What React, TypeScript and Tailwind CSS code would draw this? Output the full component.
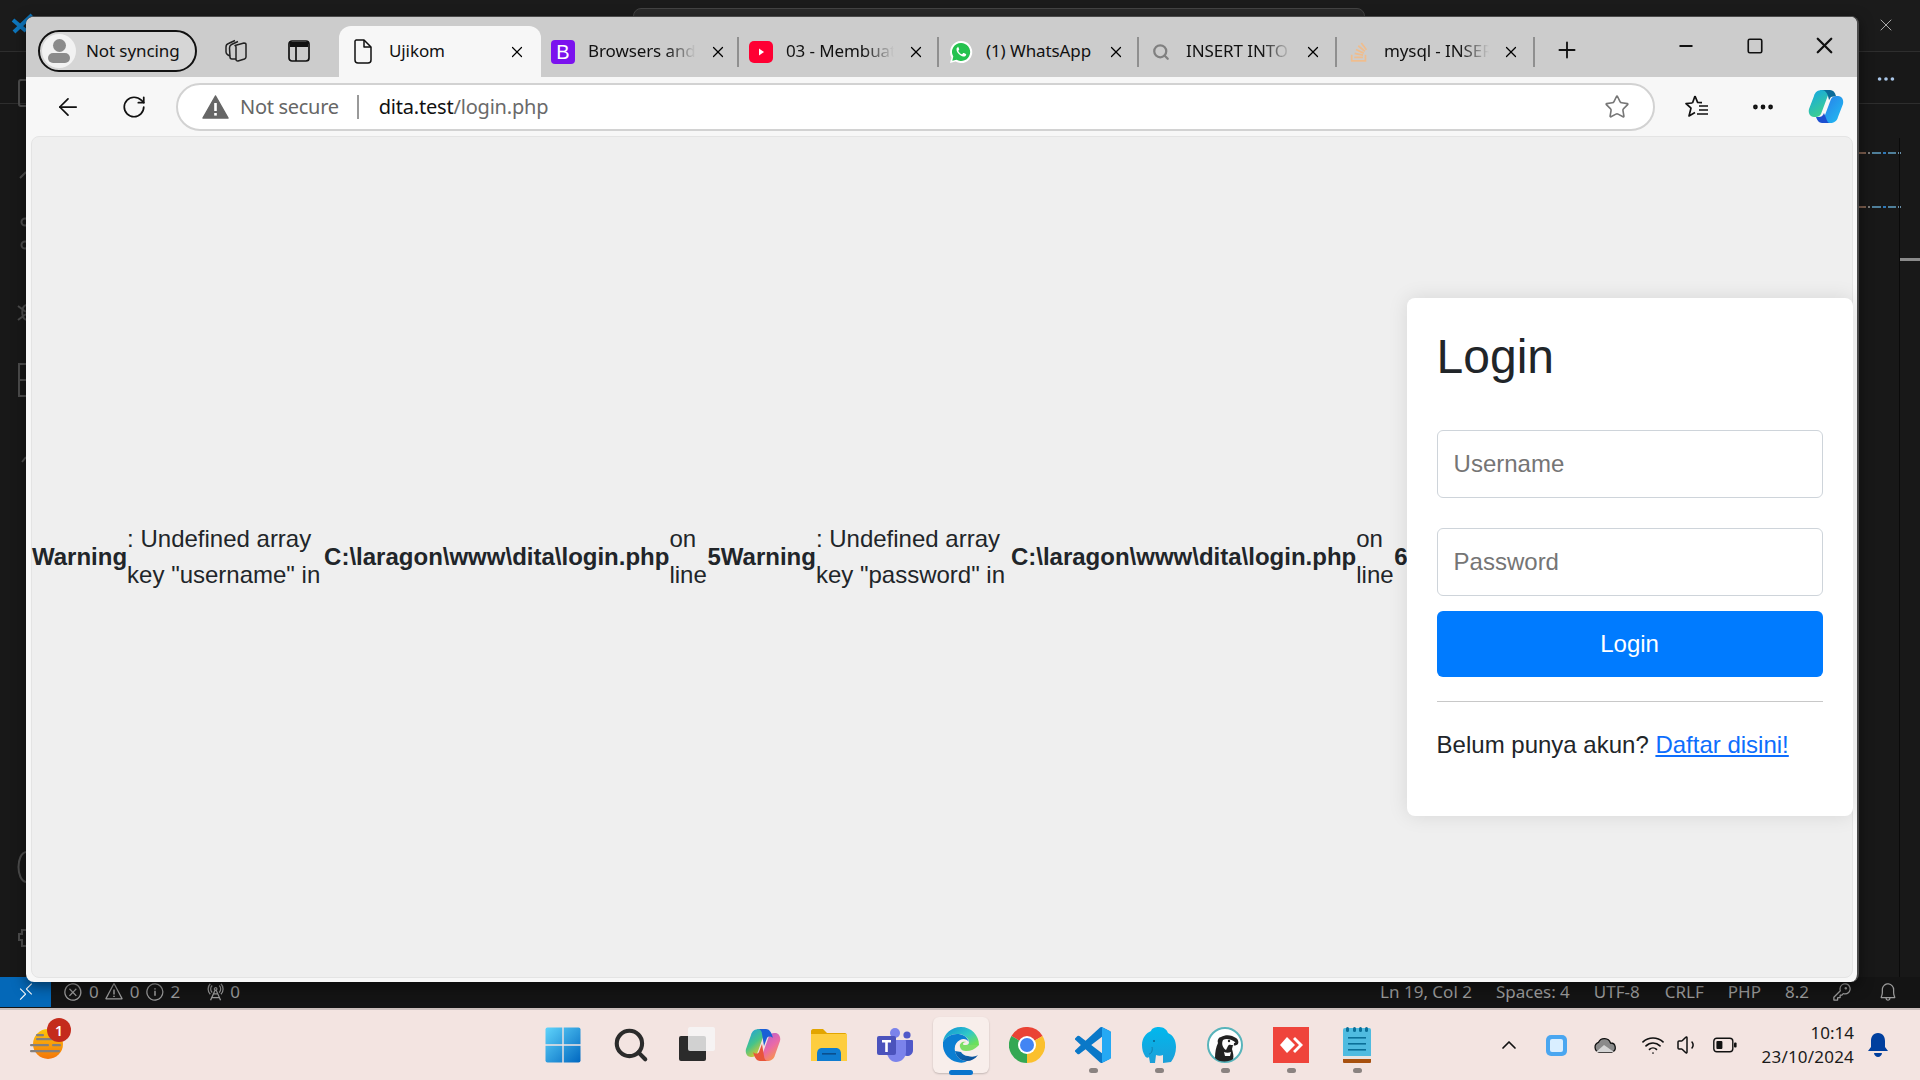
import React from 'react';
import { ArrowLeft, RotateCw, Star, Plus, Minus, Square, X, Search, ChevronUp, Wifi, Volume1, Ellipsis } from 'lucide-react';
import { VscError, VscWarning, VscInfo, VscRadioTower, VscKey, VscBell, VscRemote } from 'react-icons/vsc';
import { FaStackOverflow } from 'react-icons/fa';

const sans = 'font-["Liberation_Sans",sans-serif]';
const ui = 'font-["Noto_Sans",sans-serif]';

type TabProps = { icon: React.ReactNode; title: string; width: string; textWidth?: string; sep?: boolean; fade?: boolean };

const Tab: React.FC<TabProps> = ({ icon, title, width, textWidth = 'w-[108px]', sep = true, fade = true }) => (
  <div className={`flex items-center h-[51px] pl-[10px] relative shrink-0 ${width}`}>
    <div className="w-[24px] h-[24px] flex items-center justify-center shrink-0">{icon}</div>
    <span
      className={`ml-[13px] pb-[2px] overflow-hidden whitespace-nowrap text-[17px] text-[#111] tracking-[-0.1px] ${textWidth} ${
        fade ? '[mask-image:linear-gradient(to_right,black_72%,transparent_100%)]' : ''
      }`}
    >
      {title}
    </span>
    <X size={18} strokeWidth={1.6} className="ml-[13px] text-black shrink-0" />
    {sep && <div className="absolute right-0 top-[11px] w-[2px] h-[30px] bg-[#8f8f8f]" />}
  </div>
);

const BootstrapIcon = () => (
  <div className={`w-[24px] h-[24px] rounded-[4px] bg-[#7b12ee] text-white text-[20px] leading-[24px] text-center ${sans}`}>B</div>
);

const YoutubeIcon = () => (
  <svg width="24" height="22" viewBox="0 0 24 22">
    <rect width="24" height="22" y="0" rx="5" fill="#ff0033" />
    <path d="M10 7.500l5 3.500-5 3.500z" fill="#fff" />
  </svg>
);

const WhatsappIcon = () => (
  <svg width="24" height="24" viewBox="0 0 24 24">
    <path d="M12 1a11 11 0 0 0-9.500 16.500L1 23l5.700-1.500A11 11 0 1 0 12 1z" fill="#fff" />
    <path d="M12 3a9 9 0 0 0-7.700 13.600L3.300 20.700l4.200-1A9 9 0 1 0 12 3z" fill="#25c24f" />
    <path
      d="M8.800 7.300c-.5 0-1.300.7-1.300 2.200 0 2 1.500 4 3.500 5.500 2 1.400 3.500 1.800 4.500 1.500 1-.3 1.700-1.200 1.700-2 0-.3-.1-.4-.3-.5l-2-1c-.3-.1-.5-.1-.7.100l-.8 1c-.2.200-.4.200-.7.100-1.600-.7-2.700-1.900-3.300-3-.1-.3 0-.5.100-.6l.6-.8c.1-.2.200-.4.100-.6l-.8-2c-.1-.3-.3-.4-.6-.4z"
      fill="#fff"
    />
  </svg>
);

const WindowsLogo = () => (
  <svg className="mr-[4px]" width="36" height="36" viewBox="0 0 36 36">
    <defs>
      <linearGradient id="win" x1="0" y1="0" x2="1" y2="1">
        <stop offset="0" stopColor="#5fd4fb" />
        <stop offset="1" stopColor="#0067c0" />
      </linearGradient>
    </defs>
    <rect x="0.5" y="0.5" width="35" height="35" rx="2" fill="url(#win)" />
    <path d="M18 0v36M0 18h36" stroke="#f3e4e1" strokeWidth="1.4" />
  </svg>
);

const TaskView = () => (
  <svg width="36" height="36" viewBox="0 0 36 36">
    <rect x="0" y="9" width="27" height="25" rx="2" fill="#2b2b2b" />
    <rect x="9" y="0" width="27" height="24" rx="2" fill="#f6f6f6" fillOpacity="0.82" />
  </svg>
);

const CopilotColor = () => (
  <svg width="36" height="34" viewBox="0 0 36 34">
    <defs>
      <linearGradient id="cpa" x1="0" y1="0" x2="0.6" y2="1">
        <stop offset="0" stopColor="#1c9be8" />
        <stop offset="0.55" stopColor="#45c48a" />
        <stop offset="1" stopColor="#f2c81e" />
      </linearGradient>
      <linearGradient id="cpb" x1="0" y1="0" x2="0.6" y2="1">
        <stop offset="0" stopColor="#a85ed8" />
        <stop offset="0.6" stopColor="#ea6aa8" />
        <stop offset="1" stopColor="#f8944a" />
      </linearGradient>
    </defs>
    <path d="M14 1h7l-9 25c-1 2-3 3-5 3H6C2 29 0 25 1 21l5-14c1-4 4-6 8-6z" fill="url(#cpa)" />
    <path d="M22 33h-7l9-25c1-2 3-3 5-3h1c4 0 6 4 5 8l-5 14c-1 4-4 6-8 6z" fill="url(#cpb)" />
    <path d="M13 1h8c3 0 5 3 6 6l1 3c-2-2-5-2-6 0l-3 8-2-12c0-3-2-5-4-5z" fill="#1a5fd6" />
    <path d="M23 33h-8c-3 0-5-3-6-6l-1-3c2 2 5 2 6 0l3-8 2 12c0 3 2 5 4 5z" fill="#e8553a" />
  </svg>
);

const CopilotBlue = () => (
  <svg width="36" height="33" viewBox="0 0 36 33">
    <defs>
      <linearGradient id="cca" x1="0" y1="0" x2="0.5" y2="1">
        <stop offset="0" stopColor="#12a5e8" />
        <stop offset="1" stopColor="#3ed08f" />
      </linearGradient>
      <linearGradient id="ccb" x1="0" y1="0" x2="1" y2="1">
        <stop offset="0" stopColor="#2a7ae8" />
        <stop offset="1" stopColor="#1fc0f2" />
      </linearGradient>
    </defs>
    <path d="M14 0h8l-9 24c-1 2-3 3-5 3H6C2 27 0 23 1 19L6 6c1-4 4-6 8-6z" fill="url(#cca)" />
    <path d="M22 33h-8l9-24c1-2 3-3 5-3h2c4 0 6 4 5 8l-5 13c-1 4-4 6-8 6z" fill="url(#ccb)" />
    <path d="M14 0h8c3 0 5 2 6 6l-5 1c-1 1-1 2-2 3L20 6c-1-3-3-6-6-6z" fill="#0c6b98" />
    <path d="M14 33h8c-2 0-3-2-4-5l-2-5-1 2c-1 1-2 2-4 2h-3c1 3 3 6 6 6z" fill="#1d4fd0" />
  </svg>
);

const Explorer = () => (
  <svg width="36" height="32" viewBox="0 0 36 32">
    <path d="M0 2c0-1 1-2 2-2h10l4 4h18c1 0 2 1 2 2v3H0z" fill="#e2a500" />
    <path d="M0 5h36v27H0z" fill="#fdcd3f" />
    <path d="M6 32v-7c0-4 2-6 5-6h14c3 0 5 2 5 6v7z" fill="#0f7cd0" />
    <rect x="11" y="24" width="14" height="1.6" fill="#0a4f8e" />
  </svg>
);

const Teams = () => (
  <svg width="36" height="34" viewBox="0 0 36 34">
    <circle cx="18" cy="5" r="5" fill="#7b83eb" />
    <circle cx="30" cy="7" r="3.6" fill="#5059c9" />
    <path d="M26 12h9c1 0 1 1 1 1v9c0 4-3 6-6 6-2 0-4-1-4-3z" fill="#5059c9" />
    <path d="M10 12h18c1 0 1 1 1 1v11c0 6-5 10-10 10S10 29 10 24z" fill="#7b83eb" />
    <rect x="0" y="8" width="19" height="19" rx="2" fill="#4b53bc" />
    <path d="M5 12h9v2.4h-3.2V24H8.2v-9.6H5z" fill="#fff" />
  </svg>
);

const Edge = () => (
  <svg width="36" height="36" viewBox="0 0 36 36">
    <defs>
      <linearGradient id="ed1" x1="0" y1="0" x2="1" y2="0.8">
        <stop offset="0" stopColor="#0c8cd8" />
        <stop offset="0.6" stopColor="#30c8c8" />
        <stop offset="1" stopColor="#6de05a" />
      </linearGradient>
      <linearGradient id="ed2" x1="0" y1="0" x2="1" y2="1">
        <stop offset="0" stopColor="#0a6fc0" />
        <stop offset="1" stopColor="#0c4a90" />
      </linearGradient>
    </defs>
    <path d="M18 0C8 0 1 7 0 15c3-5 8-8 14-8 8 0 12 5 12 8 0 2-1 3-3 3h13c0-10-8-18-18-18z" fill="url(#ed1)" />
    <path d="M0 15c-1 10 5 18 14 20 4 1 7 1 10-1-6 0-11-4-12-10-1-5 1-9 5-11 3-2 7-1 9 2-2-6-7-8-12-8C8 7 3 10 0 15z" fill="#0b7ed2" />
    <path d="M12 24c1 6 6 10 12 10 4 0 8-2 11-6-3 2-7 2-10 1-3 0-6-2-7-4-2 0-4-1-6-1z" fill="url(#ed2)" />
    <path d="M17 20c1 3 3 4 6 4 5 0 9-2 12-5l1-1H23c-2 0-3 0-3-1 0-1 1-2 3-2-3-1-7 1-6 5z" fill="#6fdc58" fillOpacity="0.9" />
  </svg>
);

const Chrome = () => (
  <svg width="36" height="36" viewBox="0 0 36 36">
    <path d="M18 18 2.400 9A18 18 0 0 1 33.600 9z" fill="#ea4335" />
    <path d="M18 18 2.400 9A18 18 0 0 0 18 36z" fill="#34a853" />
    <path d="M18 18 33.600 9A18 18 0 0 1 18 36z" fill="#fbc02d" />
    <circle cx="18" cy="18" r="9" fill="#fff" />
    <circle cx="18" cy="18" r="7" fill="#4285f4" />
  </svg>
);

const VSCodeLogo = () => (
  <svg width="36" height="36" viewBox="0 0 24 24">
    <path
      d="M23.15 2.587L18.21.21a1.494 1.494 0 0 0-1.705.29l-9.46 8.63-4.12-3.128a.999.999 0 0 0-1.276.057L.327 7.261A1 1 0 0 0 .326 8.74L3.899 12 .326 15.26a1 1 0 0 0 .001 1.479L1.65 17.94a.999.999 0 0 0 1.276.057l4.12-3.128 9.46 8.63a1.492 1.492 0 0 0 1.704.29l4.942-2.377A1.5 1.5 0 0 0 24 20.06V3.939a1.5 1.5 0 0 0-.85-1.352zm-5.146 14.861L10.826 12l7.178-5.448v10.896z"
      fill="#0a78c8"
    />
    <path d="M18 .1 23.150 2.587A1.500 1.500 0 0 1 24 3.939V20.060a1.500 1.500 0 0 1-.85 1.352L18 23.900z" fill="#25a9f4" />
  </svg>
);

const Elephant = () => (
  <svg width="34" height="36" viewBox="0 0 34 36">
    <defs>
      <linearGradient id="el" x1="0" y1="0" x2="0" y2="1">
        <stop offset="0" stopColor="#00b8ee" />
        <stop offset="1" stopColor="#1d9fd8" />
      </linearGradient>
    </defs>
    <path d="M17 0c5 0 8 3 9 6 5 2 8 7 8 14 0 6-2 11-5 15l-8 1v-8c-2 1-5 1-7 0l-1 8H8l-1-6c-1 1-3 1-4-1-2-3-3-7-3-11 0-7 4-12 9-14 1-3 4-4 8-4z" fill="url(#el)" />
    <path d="M7 27c2 0 4-3 3-7" stroke="#117fb0" strokeWidth="1" fill="none" />
    <circle cx="12" cy="14" r="1" fill="#0a5f88" />
  </svg>
);

const DBeaver = () => (
  <svg width="36" height="36" viewBox="0 0 36 36">
    <circle cx="18" cy="18" r="17" fill="#fff" stroke="#58b4bb" strokeWidth="2" />
    <path d="M8 31c0-6 1-11 3-15-1-3 1-6 3-6 5-3 11-2 15 1 2 1 3 4 2 6-1 1-3 2-5 1l-1 4c1 4 2 7 1 10-3 3-14 4-18-1z" fill="#222" />
    <path d="M16 13c3-2 8-1 12 2 1 2 0 3-2 3-3 0-4-1-5 1l-2 4c-3-2-5-6-3-10z" fill="#fff" />
    <path d="M17 25c2 1 5 1 7 0l-1 4h-5z" fill="#fff" />
    <circle cx="22" cy="14" r="1.200" fill="#222" />
    <circle cx="28" cy="17" r="1.200" fill="#222" />
  </svg>
);

const AnyDesk = () => (
  <svg width="36" height="36" viewBox="0 0 36 36">
    <rect width="36" height="36" fill="#ef443b" />
    <path d="M14 10l8 8-8 8-7-8z" fill="#fff" />
    <path d="M22 10l8 8-8 8-2-2 6-6-6-6z" fill="#fff" />
  </svg>
);

const Notepad = () => (
  <svg width="28" height="36" viewBox="0 0 28 36">
    <rect y="1" width="28" height="30" rx="2" fill="#4fbbe0" />
    <rect y="30" width="28" height="6" rx="1" fill="#a8510f" />
    <rect y="29" width="28" height="3" fill="#e8e4e2" />
    <g fill="#0a6f98">
      <rect x="3" y="0" width="3" height="5" rx="1.5" />
      <rect x="10" y="0" width="3" height="5" rx="1.5" />
      <rect x="16" y="0" width="3" height="5" rx="1.5" />
      <rect x="22" y="0" width="3" height="5" rx="1.5" />
      <rect x="5" y="10" width="18" height="1.6" />
      <rect x="5" y="16" width="18" height="1.6" />
      <rect x="5" y="22" width="18" height="1.6" />
    </g>
  </svg>
);

const WeatherIcon = () => (
  <svg width="36" height="34" viewBox="0 0 36 34">
    <defs>
      <linearGradient id="sun" x1="0" y1="0" x2="0" y2="1">
        <stop offset="0" stopColor="#fcc60a" />
        <stop offset="1" stopColor="#f4760a" />
      </linearGradient>
    </defs>
    <circle cx="18" cy="19" r="15" fill="url(#sun)" />
    <g fill="#85807c">
      <rect x="6" y="9" width="8" height="2.2" rx="1" />
      <rect x="6" y="13" width="30" height="2.2" rx="1" />
      <rect x="0" y="19" width="19" height="2.2" rx="1" />
      <rect x="22" y="19" width="9" height="2.2" rx="1" />
      <rect x="0" y="25" width="30" height="2.2" rx="1" />
    </g>
  </svg>
);

const OneDrive = () => (
  <svg width="24" height="16" viewBox="0 0 24 16">
    <path d="M6 15a5 5 0 0 1-.6-9.6A6.5 6.5 0 0 1 17.5 6 4.6 4.6 0 0 1 19 15z" fill="#8a8a8a" stroke="#111" strokeWidth="1.3" />
    <path d="M3 15l8-7 10 7z" fill="#d4d4d4" />
  </svg>
);

const Battery = () => (
  <svg width="24" height="16" viewBox="0 0 24 16" fill="none">
    <rect x="0.8" y="1.2" width="19" height="13.6" rx="3" stroke="#111" strokeWidth="1.4" />
    <rect x="3.4" y="4" width="6" height="8" rx="1" fill="#111" />
    <rect x="21" y="5.5" width="2.6" height="5" rx="1" fill="#111" />
  </svg>
);

const FavoritesIcon = () => (
  <svg width="26" height="26" viewBox="0 0 26 26" fill="none" stroke="#111" strokeWidth="1.7" strokeLinejoin="round">
    <path d="M11 2l2.6 6.4 4.4.3M8.5 9l-6.5.5 5 4.6L5 22l6-3.4" />
    <path d="M11 2 8.5 9" />
    <path d="M15 12h9M15 16h9M13 20h11" />
  </svg>
);

// slivers of the vs code activity bar that stick out left of the browser
const ActivitySliver = () => (
  <svg width="26" height="960" viewBox="0 0 26 960" fill="none" stroke="#4d4d4d" strokeWidth="2">
    <path d="M26 80h-5c-1 0-2 1-2 2v22c0 1 1 2 2 2h5" />
    <path d="M20 178l6-6" />
    <circle cx="25" cy="222" r="3.500" />
    <circle cx="25" cy="245" r="3.500" />
    <path d="M18 306l8 6M18 320l8-6M26 305c-5 2-5 12 0 15" />
    <path d="M26 364h-7v32h7M19 380h7" />
    <path d="M22 462l4-5" />
    <path d="M26 852c-10 2-10 28 0 30" />
    <path d="M26 930h-4v4h-3v6h3v6h4" />
  </svg>
);

const CodeDash: React.FC<{ top: string }> = ({ top }) => (
  <div className={`absolute left-[1859px] flex gap-[2px] h-[2px] ${top}`}>
    <div className="w-[7px] bg-[#7a5c4c]" />
    <div className="w-[2px] bg-[#7a7a7a]" />
    <div className="w-[9px] bg-[#4f7f9a]" />
    <div className="w-[3px] bg-[#2f78b8]" />
    <div className="w-[8px] bg-[#4f7f9a]" />
    <div className="w-[3px] bg-[#6a8fa8]" />
  </div>
);

const taskbarIcons: { el: React.ReactNode; open?: boolean; active?: boolean }[] = [
  { el: <WindowsLogo /> },
  { el: <Search size={38} strokeWidth={2.6} className="text-[#2b2b2b]" /> },
  { el: <TaskView /> },
  { el: <CopilotColor /> },
  { el: <Explorer /> },
  { el: <Teams /> },
  { el: <Edge />, active: true },
  { el: <Chrome /> },
  { el: <VSCodeLogo />, open: true },
  { el: <Elephant />, open: true },
  { el: <DBeaver />, open: true },
  { el: <AnyDesk />, open: true },
  { el: <Notepad />, open: true },
];

const Warning: React.FC<{ text: [string, string]; width: string; line: string }> = ({ text, width, line }) => (
  <>
    <b className="shrink-0">Warning</b>
    <span className={`shrink-0 whitespace-nowrap ${width}`}>
      {text[0]}
      <br />
      {text[1]}
    </span>
    <b className="shrink-0">C:\laragon\www\dita\login.php</b>
    <span className="shrink-0 w-[38px]">
      on
      <br />
      line
    </span>
    <b className="shrink-0">{line}</b>
  </>
);

const App: React.FC = () => {
  return (
    <div className={`w-[1920px] h-[1080px] relative overflow-hidden flex flex-col bg-[#1b1b1b] ${ui}`}>
      {/* vs code sitting behind the browser */}
      <div className="flex-1 flex flex-col relative">
        <div className="h-[52px] border-b border-[#2e2e2e] flex justify-center items-start pt-[8px]">
          <div className="w-[732px] h-[30px] ml-[78px] rounded-t-lg bg-[#2a2a2a] border border-[#444]" />
        </div>
        <div className="h-[52px] border-b border-[#2e2e2e] bg-[#181818]" />
        <div className="flex-1 bg-[#181818]" />
        <div className="absolute left-0 top-0"><ActivitySliver /></div>
        <X size={20} strokeWidth={1.2} className="absolute left-[1876px] top-[15px] text-[#aaa]" />
        <Ellipsis size={22} className="absolute left-[1875px] top-[68px] text-[#a9c6e8]" />
        <CodeDash top="top-[152px]" />
        <CodeDash top="top-[206px]" />
        <div className="absolute left-[1899px] top-[138px] bottom-0 w-[1px] bg-[#0a0a0a]" />
        <div className="absolute left-[1900px] top-[258px] w-[20px] h-[3px] bg-[#8a8a8a]" />
        <svg className="absolute left-[10px] top-[12px]" width="26" height="24" viewBox="0 0 26 24">
          <path d="M3 8l13 11M22 3 4 20" stroke="#0e76bd" strokeWidth="4" />
        </svg>
      </div>

      {/* vs code status bar */}
      <div className="h-[31px] shrink-0 flex items-center bg-[#141414] text-[#9a9a9a] text-[17px] pb-[1px]">
        <div className="w-[51px] h-full bg-[#0468b8] flex items-center justify-center text-white">
          <VscRemote size={20} />
        </div>
        <div className="flex items-center ml-[12px]">
          <VscError size={20} />
          <span className="ml-[6px]">0</span>
          <VscWarning size={20} className="ml-[5px]" />
          <span className="ml-[6px]">0</span>
          <VscInfo size={20} className="ml-[6px]" />
          <span className="ml-[5px]">2</span>
          <VscRadioTower size={20} className="ml-[25px]" />
          <span className="ml-[5px]">0</span>
        </div>
        <div className="flex-1" />
        <div className="flex items-center mr-[22px]">
          <span>Ln 19, Col 2</span>
          <span className="ml-[24px]">Spaces: 4</span>
          <span className="ml-[24px]">UTF-8</span>
          <span className="ml-[25px]">CRLF</span>
          <span className="ml-[24px]">PHP</span>
          <span className="ml-[24px]">8.2</span>
          <VscKey size={20} className="ml-[23px]" />
          <VscBell size={20} className="ml-[26px]" />
        </div>
      </div>

      {/* windows taskbar */}
      <div className="h-[72px] shrink-0 bg-[#f3e4e1] border-t-2 border-[#cbbfbc] flex items-center relative">
        <div className="absolute left-[30px] top-[15px]">
          <WeatherIcon />
          <div className="absolute left-[17px] -top-[7px] w-[24px] h-[24px] rounded-full bg-[#c42b1c] text-white text-[14px] font-semibold flex items-center justify-center">
            1
          </div>
        </div>
        <div className="flex ml-[532px] h-full items-center">
          {taskbarIcons.map((t, i) => (
            <div key={i} className="w-[66px] h-[56px] flex items-center justify-center relative">
              {t.active && (
                <div className="absolute inset-y-0 left-[5px] right-[5px] rounded-md bg-[#f8eeeb] shadow-[0_1px_2px_rgba(0,0,0,0.2)]" />
              )}
              <div className="relative flex">{t.el}</div>
              {t.active && <div className="absolute bottom-[-2px] left-[21px] w-[24px] h-[5px] rounded-full bg-[#0a74cc]" />}
              {t.open && <div className="absolute bottom-0 left-[29px] w-[9px] h-[5px] rounded-full bg-[#8a8280]" />}
            </div>
          ))}
        </div>
        <div className="flex-1" />
        <div className="flex items-center text-[#111]">
          <ChevronUp size={24} strokeWidth={1.7} />
          <div className="ml-[25px] w-[21px] h-[21px] rounded-[5px] bg-[#4aa6f0] flex items-center justify-center">
            <div className="w-[13px] h-[13px] rounded-[2px] bg-[#d9eeff]" />
          </div>
          <div className="ml-[26px]"><OneDrive /></div>
          <Wifi size={24} strokeWidth={1.7} className="ml-[24px]" />
          <Volume1 size={24} strokeWidth={1.5} className="ml-[11px]" />
          <div className="ml-[13px]"><Battery /></div>
          <div className="ml-[14px] w-[103px] flex flex-col items-end text-[17px] leading-[24px] text-[#1a1a1a]">
            <span>10:14</span>
            <span className="tracking-[0.2px]">23/10/2024</span>
          </div>
          <svg className="ml-[14px] mr-[32px]" width="20" height="24" viewBox="0 0 20 24">
            <path d="M10 0c5 0 7 4 7 8v6l3 4H0l3-4V8c0-4 2-8 7-8z" fill="#003f9e" />
            <path d="M6 20h8c0 2-2 4-4 4s-4-2-4-4z" fill="#003f9e" />
          </svg>
        </div>
      </div>

      {/* browser window */}
      <div className="absolute left-[26px] top-[16px] w-[1833px] h-[966px] rounded-lg overflow-hidden flex flex-col bg-[#f7f7f7] border-t border-r-2 border-[#4a4a4a] shadow-[0_4px_14px_rgba(0,0,0,0.5)]">
        <div className="h-[60px] shrink-0 bg-[#cccccc] flex items-end relative">
          <div className="absolute left-[12px] top-[13px] w-[159px] h-[42px] rounded-full border-2 border-[#111] bg-[#d6d6d6] flex items-center">
            <div className="ml-[2px] w-[34px] h-[34px] rounded-full bg-[#f2f2f2] flex flex-col items-center justify-center">
              <div className="w-[13px] h-[13px] rounded-full bg-[#8b8b8b]" />
              <div className="w-[22px] h-[10px] mt-[1px] rounded-full bg-[#8b8b8b]" />
            </div>
            <span className="ml-[10px] text-[17px] text-[#111] tracking-[-0.1px]">Not syncing</span>
          </div>
          <svg className="absolute left-[198px] top-[22px]" width="24" height="24" viewBox="0 0 24 24" fill="none" stroke="#222" strokeWidth="1.5" strokeLinejoin="round">
            <path d="M11 6.500l9-2.500c1 0 2 .5 2 1.500V18c0 1-.5 1.500-1.500 2L14 22c-1 .2-2-.5-2-1.500V8c0-1 0-1-1-1.500z" />
            <path d="M12 20 8 20c-1 0-2-1-2-2l-.500-9c0-2 1-3 2-3.500L14 2.500" />
            <path d="M6 17l-2-1c-1-.5-2-1.500-2-3V8c0-2 1-3 2.500-3.500L11 1.500" />
          </svg>
          <svg className="absolute left-[262px] top-[23px]" width="22" height="22" viewBox="0 0 22 22" fill="none">
            <rect x="1" y="1" width="20" height="20" rx="3" stroke="#111" strokeWidth="1.7" />
            <path d="M2 2h18v5H2z" fill="#111" />
            <path d="M8 7v14" stroke="#111" strokeWidth="1.7" />
          </svg>

          <div className="ml-[313px] flex items-end">
            <div className="w-[202px] h-[51px] rounded-t-xl bg-[#f7f7f7] flex items-center pl-[14px] shrink-0">
              <svg width="20" height="25" viewBox="0 0 20 25" fill="none" stroke="#111" strokeWidth="1.5" strokeLinejoin="round">
                <path d="M3 1h8l7 7v13c0 2-1 3-3 3H5c-2 0-3-1-3-3V2z" />
                <path d="M11 1v7h7" />
              </svg>
              <span className="ml-[16px] pb-[2px] w-[119px] text-[17px] text-[#111] tracking-[-0.1px]">Ujikom</span>
              <X size={18} strokeWidth={1.6} className="text-black shrink-0" />
            </div>
            <Tab width="w-[198px]" title="Browsers and" icon={<BootstrapIcon />} />
            <Tab width="w-[200px]" title="03 - Membuat" icon={<YoutubeIcon />} />
            <Tab width="w-[200px]" title="(1) WhatsApp" fade={false} icon={<WhatsappIcon />} />
            <Tab width="w-[198px]" textWidth="w-[105px]" title="INSERT INTO" icon={<Search size={18} strokeWidth={3} className="text-[#808080]" />} />
            <Tab width="w-[198px]" textWidth="w-[105px]" title="mysql - INSERT" icon={<FaStackOverflow size={22} className="text-[#efbd8e]" />} />
          </div>
          <Plus size={26} strokeWidth={1.7} className="absolute left-[1528px] top-[20px] text-[#111]" />
          <Minus size={20} strokeWidth={2.2} className="absolute left-[1650px] top-[19px] text-[#111]" />
          <Square size={18} strokeWidth={2.2} className="absolute left-[1720px] top-[20px] text-[#111]" />
          <X size={27} strokeWidth={2} className="absolute left-[1785px] top-[15px] text-[#111]" />
        </div>

        <div className="h-[59px] shrink-0 flex items-center pl-[28px]">
          <ArrowLeft size={28} strokeWidth={1.5} className="text-[#111]" />
          <RotateCw size={26} strokeWidth={1.6} className="ml-[39px] text-[#111]" />
          <div className="ml-[29px] w-[1479px] h-[48px] rounded-full border-2 border-[#d2d2d2] bg-white flex items-center text-[20px]">
            <svg className="ml-[24px] shrink-0" width="27" height="24" viewBox="0 0 27 24">
              <path d="M13.500 1 26 23H1z" fill="#666" stroke="#666" strokeWidth="1.500" strokeLinejoin="round" />
              <rect x="12.200" y="8" width="2.600" height="8" fill="#fff" />
              <rect x="12.200" y="18" width="2.600" height="2.600" fill="#fff" />
            </svg>
            <span className="ml-[11px] pt-[1px] text-[#666] tracking-[-0.3px]">Not secure</span>
            <div className="ml-[18px] w-[2px] h-[24px] bg-[#999]" />
            <span className="ml-[20px] pt-[1px] text-[#111] tracking-[-0.2px]">dita.test</span>
            <span className="pt-[1px] text-[#6a6a6a] tracking-[-0.2px]">/login.php</span>
            <div className="flex-1" />
            <Star size={26} strokeWidth={1.5} className="mr-[23px] text-[#777]" />
          </div>
          <div className="ml-[29px]"><FavoritesIcon /></div>
          <Ellipsis size={26} strokeWidth={2.4} className="ml-[40px] text-[#111]" />
          <div className="ml-[32px]"><CopilotBlue /></div>
        </div>

        {/* page */}
        <div className={`flex-1 ml-[5px] mr-[4px] mb-[4px] pb-[1px] rounded-lg border border-[#e4e4e4] bg-[#efefef] flex items-center text-[24px] leading-[36px] text-[#212529] ${sans}`}>
          <Warning text={[': Undefined array', 'key "username" in']} width="w-[197px]" line="5" />
          <Warning text={[': Undefined array', 'key "password" in']} width="w-[195px]" line="6" />
          <div className="w-[446px] h-[518px] shrink-0 -ml-[1px] rounded-lg bg-white p-[30px] shadow-[0_0_20px_rgba(0,0,0,0.1)]">
            <h2 className="text-[48px] leading-[58px] font-normal">Login</h2>
            <input
              placeholder="Username"
              readOnly
              className="mt-[44px] block w-full h-[68px] px-[16px] text-[24px] border border-[#ced4da] rounded-md outline-none placeholder:text-[#757575]"
            />
            <input
              placeholder="Password"
              readOnly
              className="mt-[30px] block w-full h-[68px] px-[16px] text-[24px] border border-[#ced4da] rounded-md outline-none placeholder:text-[#757575]"
            />
            <button className="mt-[15px] block w-full h-[66px] rounded-md bg-[#007bff] text-white text-[24px]">Login</button>
            <hr className="mt-[24px] border-[#c8c8c8]" />
            <p className="mt-[25px]">
              Belum punya akun? <a className="text-[#0d6efd] underline">Daftar disini!</a>
            </p>
          </div>
        </div>
      </div>
    </div>
  );
};

export default App;
